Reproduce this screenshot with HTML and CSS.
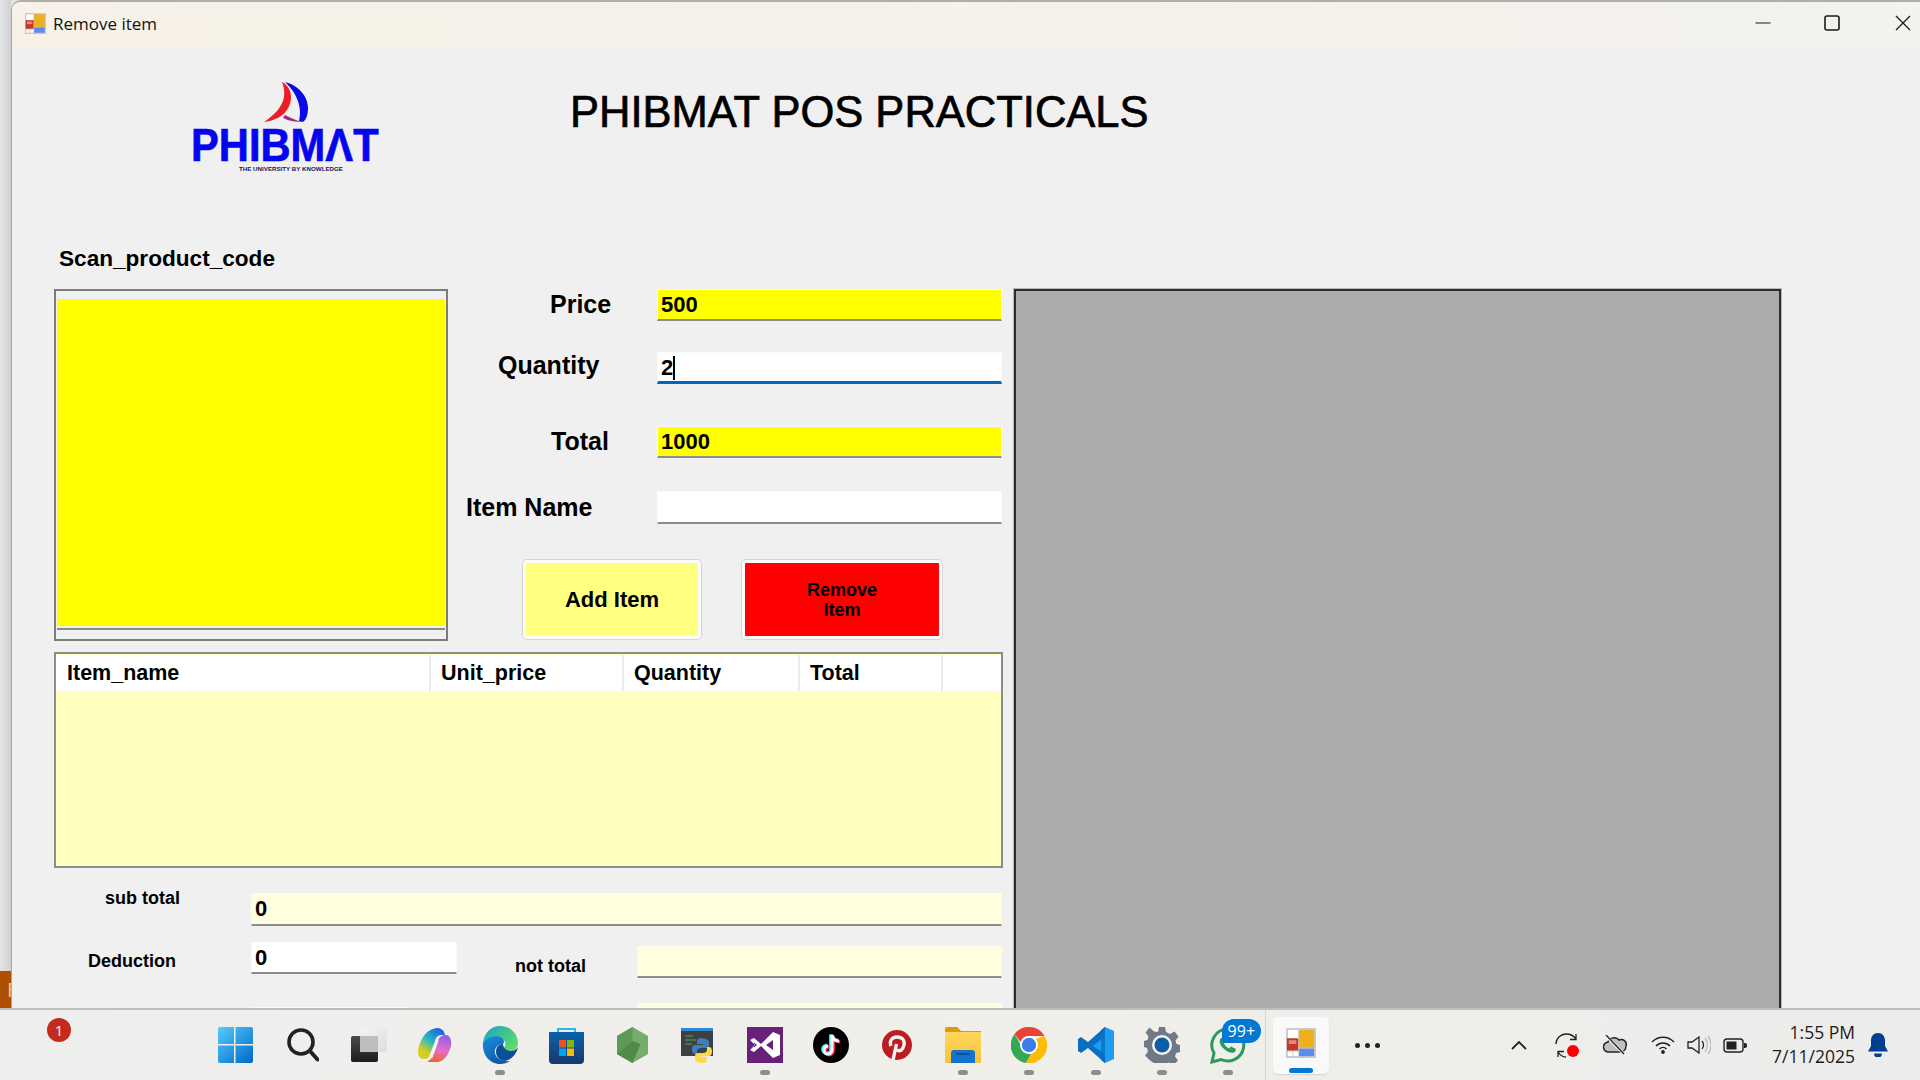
FILE: index.html
```html
<!DOCTYPE html>
<html lang="en">
<head>
<meta charset="utf-8">
<title>Remove item</title>
<link rel="stylesheet" href="styles.css">
</head>
<body>
<svg class="defs" width="0" height="0" aria-hidden="true">
  <symbol id="app-icon" viewBox="0 0 32 32">
    <rect x="0" y="0" width="32" height="32" fill="#c9c9c9"/>
    <rect x="2" y="2" width="11" height="9" fill="#fff"/>
    <rect x="2" y="25" width="5" height="5" fill="#fff"/>
    <rect x="8" y="25" width="5" height="5" fill="#fff"/>
    <rect x="1" y="11" width="12" height="13" fill="#c9352b"/>
    <rect x="3" y="13" width="8" height="4" fill="#e88a80"/>
    <rect x="14" y="2" width="16" height="19" fill="#eeb01c"/>
    <rect x="14" y="22" width="16" height="8" fill="#5a8cf0"/>
  </symbol>
</svg>
<div class="screen">
  <div class="desktop">
    <div class="edge"><div class="edge-tile">F</div></div>
    <div class="window">
      <header class="titlebar">
        <svg class="title-icon"><use href="#app-icon"/></svg>
        <span class="title-text">Remove item</span>
        <div class="controls">
          <svg class="ctl ctl-min" width="16" height="16" viewBox="0 0 16 16"><path d="M0.5 8h15" stroke="#1a1a1a" stroke-width="1.2"/></svg>
          <svg class="ctl ctl-max" width="16" height="16" viewBox="0 0 16 16"><rect x="1" y="1" width="14" height="14" rx="2" fill="none" stroke="#1a1a1a" stroke-width="1.6"/></svg>
          <svg class="ctl ctl-close" width="16" height="16" viewBox="0 0 16 16"><path d="M1 1l14 14M15 1L1 15" stroke="#1a1a1a" stroke-width="1.3"/></svg>
        </div>
      </header>
      <main class="form">
        <div class="brand">
          <svg class="logo" width="194" height="96" viewBox="190 78 194 96">
            <path d="M282 82C287 95 285 108 264 122C281 120 291 110 291 97C291 92 289 87 284 83Z" fill="#ee1c25"/>
            <path d="M285 82C298 85 308 96 308 108C308 115 306 120 303 122L299 121C302 110 299 95 285 82Z" fill="#0a0ae6"/>
            <path d="M285 115C291 118 297 121 303 122C296 122 289 121 283 118Z" fill="#a02a80"/>
            <text class="logo-name" transform="translate(191 161) scale(1 1.12)">PHIBMΛT</text>
            <text class="logo-tag" x="239" y="171" textLength="104" lengthAdjust="spacingAndGlyphs">THE UNIVERSITY BY KNOWLEDGE</text>
          </svg>
          <h1 class="heading">PHIBMAT POS PRACTICALS</h1>
        </div>
        <div class="scan-label">Scan_product_code</div>
        <div class="main">
          <div class="left">
            <div class="upper">
              <div class="scan-panel"><div class="scan-yellow"></div></div>
              <div class="fields">
                <div class="row"><span class="lbl lbl-price">Price</span><div class="input yellow">500</div></div>
                <div class="row row-qty"><span class="lbl lbl-qty">Quantity</span><div class="input white focus">2<span class="caret"></span></div></div>
                <div class="row row-total"><span class="lbl lbl-total">Total</span><div class="input yellow">1000</div></div>
                <div class="row row-item"><span class="lbl lbl-item">Item Name</span><div class="input white"></div></div>
                <div class="buttons">
                  <div class="btn btn-add">Add Item</div>
                  <div class="btn btn-remove">Remove<br>Item</div>
                </div>
              </div>
            </div>
            <div class="table">
              <div class="thead">
                <div class="th th-first">Item_name</div>
                <div class="th">Unit_price</div>
                <div class="th">Quantity</div>
                <div class="th">Total</div>
                <div class="th"></div>
              </div>
            </div>
            <div class="sum sum-1">
              <span class="sum-lbl sub-lbl">sub total</span>
              <div class="input cream sub-input">0</div>
            </div>
            <div class="sum sum-2">
              <span class="sum-lbl ded-lbl">Deduction</span>
              <div class="input white ded-input">0</div>
              <span class="sum-lbl net-lbl">not total</span>
              <div class="input cream net-input"></div>
            </div>
            <div class="sum sum-3">
              <div class="input white last-left"></div>
              <div class="input cream last-right"></div>
            </div>
          </div>
          <div class="preview"></div>
        </div>
      </main>
    </div>
  </div>
  <footer class="taskbar">
    <div class="tb-start"><span class="notif">1</span></div>
    <div class="apps">
      <div class="app"><svg width="35" height="36" viewBox="0 0 35 36"><defs><linearGradient id="win" gradientUnits="userSpaceOnUse" x1="0" y1="0" x2="35" y2="36"><stop offset="0" stop-color="#55cdfc"/><stop offset="1" stop-color="#0068c8"/></linearGradient></defs><path fill="url(#win)" d="M2 0h14v17H0V2a2 2 0 0 1 2-2zM17.500 0H33a2 2 0 0 1 2 2v15H17.500zM0 18.500h16V36H2a2 2 0 0 1-2-2zM17.500 18.500H35V34a2 2 0 0 1-2 2H17.500z"/></svg></div>
      <div class="app app-shift"><svg width="32" height="34" viewBox="0 0 32 34"><circle cx="14" cy="14" r="12" fill="none" stroke="#222" stroke-width="3.6"/><path d="M23 23l7.500 8.500" stroke="#222" stroke-width="4" stroke-linecap="round"/></svg></div>
      <div class="app app-shift"><svg width="36" height="36" viewBox="0 0 36 36"><defs><linearGradient id="tv" x1="0" y1="0" x2="0" y2="1"><stop offset="0" stop-color="#4a4a4a"/><stop offset="1" stop-color="#1c1c1c"/></linearGradient><linearGradient id="tv2" x1="0" y1="0" x2="1" y2="1"><stop offset="0" stop-color="#f4f4f4"/><stop offset="1" stop-color="#dedede"/></linearGradient></defs><rect x="0" y="9" width="27" height="26" rx="2" fill="url(#tv)"/><rect x="9" y="0" width="27" height="25" rx="2" fill="url(#tv2)"/><rect x="9" y="9" width="18" height="16" fill="#bebebe"/></svg></div>
      <div class="app app-shift"><svg width="34" height="36" viewBox="0 0 34 36"><defs><linearGradient id="co1" x1="0.8" y1="0" x2="0.2" y2="1"><stop offset="0" stop-color="#1f5fe0"/><stop offset="0.45" stop-color="#25b6c8"/><stop offset="0.8" stop-color="#d6cf20"/></linearGradient><linearGradient id="co2" x1="0.6" y1="0" x2="0.4" y2="1"><stop offset="0" stop-color="#9a5ce8"/><stop offset="0.55" stop-color="#e070c8"/><stop offset="1" stop-color="#f5602c"/></linearGradient></defs><path d="M19 1C9 2 4 10 1 19c-2 6-1 13 5 13 3 0 5-1 6-5l5-13c1-4 3-6 7-6h3c-1-5-4-7-8-7z" fill="url(#co1)"/><path d="M28 8c-4 0-7 2-8 6l-5 14c-1 3-3 5-6 7h11c7-1 11-9 13-16 1-6-1-11-5-11z" fill="url(#co2)"/><path d="M19.500 13L13 31" stroke="#f6f2f2" stroke-width="2.500"/></svg></div>
      <div class="app app-run"><svg width="36" height="38" viewBox="0 0 36 38"><defs><linearGradient id="ed1" x1="0" y1="0" x2="1" y2="0.7"><stop offset="0" stop-color="#16a2c8"/><stop offset="1" stop-color="#5fdc64"/></linearGradient><linearGradient id="ed2" x1="0" y1="0" x2="0.6" y2="1"><stop offset="0" stop-color="#1a8fe0"/><stop offset="1" stop-color="#0c59a4"/></linearGradient></defs><path d="M1 17C2 7 9 0 18 0c10 0 18 7 18 17 0 5-4 8-9 8-3 0-6-1-6-3 2-1 3-3 2-6-2-5-10-6-15-3-3 1-6 4-7 4z" fill="url(#ed1)"/><path d="M1 17c4-6 13-9 19-5 2 2 3 4 1 6-5 0-9 4-8 9 1 5 6 9 15 8-3 2-6 3-10 3C8 38 0 29 1 17z" fill="url(#ed2)"/><path d="M14 26c0-5 3-8 7-8 0 3 2 6 7 7 3 0 6-1 8-4-2 9-9 14-14 14-5-1-8-5-8-9z" fill="#0b4f96"/></svg></div>
      <div class="app"><svg width="35" height="37" viewBox="0 0 35 37"><defs><linearGradient id="st" x1="0" y1="0" x2="0" y2="1"><stop offset="0" stop-color="#0b62ac"/><stop offset="1" stop-color="#17396c"/></linearGradient></defs><path d="M9 7V2h17v5" fill="none" stroke="#29b8ec" stroke-width="2"/><path d="M0 5h35v28a4 4 0 0 1-4 4H4a4 4 0 0 1-4-4z" fill="url(#st)"/><rect x="10" y="13" width="7" height="7.500" fill="#f25022"/><rect x="18" y="13" width="7" height="7.500" fill="#7fba00"/><rect x="10" y="21.500" width="7" height="7.500" fill="#00a4ef"/><rect x="18" y="21.500" width="7" height="7.500" fill="#ffb900"/></svg></div>
      <div class="app"><svg width="31" height="36" viewBox="0 0 31 36"><path d="M15.500 0L31 9v18l-15.500 9L0 27V9z" fill="#77ad6c"/><path d="M15.500 0L0 9v18l8 4.500L15.500 14z" fill="#5e9a55"/><path d="M0 27l15.500 9 8-19-8-3z" fill="#4f8c48"/></svg></div>
      <div class="app"><svg width="34" height="36" viewBox="0 0 34 36"><rect x="0" y="1" width="32" height="28" fill="#3d4144"/><rect x="0" y="1" width="32" height="3" fill="#2e8ad0"/><path d="M4 9h8M4 13h11M4 17h7" stroke="#4caf50" stroke-width="1.200"/><path d="M21 11c-4 0-5 2-5 3.500V17h6v1h-8c-2 0-3 2-3 4.500s1 4.500 3 4.500h2v-3c0-2 2-3 4-3h5c2 0 3-1 3-3v-3c0-2-3-3.500-7-3.500z" fill="#3d7fb8"/><path d="M21 36c4 0 5-2 5-3.500V30h-6v-1h8c2 0 3-2 3-4.500S30 20 28 20h-2v3c0 2-2 3-4 3h-5c-2 0-3 1-3 3v3c0 2 3 4 7 4z" fill="#ffd94a"/></svg></div>
      <div class="app app-run"><svg width="36" height="36" viewBox="0 0 36 36"><rect width="36" height="36" fill="#68217a"/><path d="M3 13l4-2 7 6L26 5l7 3v20l-7 3-12-12-7 6-4-2 5-5zM7 15.500v5l3-2.500zM26 13l-7 5 7 5z" fill="#fff" fill-rule="evenodd"/></svg></div>
      <div class="app"><svg width="36" height="36" viewBox="0 0 36 36"><circle cx="18" cy="18" r="18" fill="#000"/><path d="M19 8v15a4 4 0 1 1-4-4M19 8c.5 3.500 3 6 7 6" fill="none" stroke="#25f4ee" stroke-width="3.400" transform="translate(-1.200 -.8)"/><path d="M19 8v15a4 4 0 1 1-4-4M19 8c.5 3.500 3 6 7 6" fill="none" stroke="#fe2c55" stroke-width="3.400" transform="translate(1.200 .8)"/><path d="M19 8v15a4 4 0 1 1-4-4M19 8c.5 3.500 3 6 7 6" fill="none" stroke="#fff" stroke-width="3"/></svg></div>
      <div class="app"><svg width="30" height="30" viewBox="0 0 30 30"><circle cx="15" cy="15" r="15" fill="#bd1c22"/><path d="M11 30l3.500-16M9 16c-2-5 1-9 6-9s8 3 7 8-4 7-7 5" fill="none" stroke="#f4f4f0" stroke-width="3.400"/></svg></div>
      <div class="app app-run"><svg width="36" height="36" viewBox="0 0 36 36"><defs><linearGradient id="fo" x1="0" y1="0" x2="0" y2="1"><stop offset="0" stop-color="#ffd75e"/><stop offset="1" stop-color="#f9c13a"/></linearGradient></defs><path d="M0 2a2 2 0 0 1 2-2h10l4 4h20v4H0z" fill="#d99e10"/><rect x="0" y="5" width="36" height="31" fill="url(#fo)"/><path d="M6 26a3 3 0 0 1 3-3h18a3 3 0 0 1 3 3v10H6z" fill="#1274cc"/><rect x="11" y="26" width="14" height="2" fill="#0b4f96"/></svg></div>
      <div class="app app-run"><svg width="36" height="36" viewBox="0 0 36 36"><path d="M18 0a18 18 0 0 1 15.600 9H18a9 9 0 0 0-8.500 6L3.600 7A18 18 0 0 1 18 0z" fill="#ea4335"/><path d="M3.600 7l8.600 15a9 9 0 0 0 8 4.800L15 36A18 18 0 0 1 3.600 7z" fill="#34a853"/><path d="M33.600 9A18 18 0 0 1 15 36l8-13.500A9 9 0 0 0 25 12z" fill="#fbbc04"/><circle cx="18" cy="18" r="9" fill="#fff"/><circle cx="18" cy="18" r="7.200" fill="#3b7ded"/></svg></div>
      <div class="app app-run"><svg width="36" height="36" viewBox="0 0 36 36"><path d="M27 0l9 4v28l-9 4L10 20z" fill="#1f9cf0"/><path d="M27 0v36l-4-3V3z" fill="#0b7ad1"/><path d="M27 0L10 15 3 10 0 12v12l3 2 7-5 17 15 0-9-12-8 12-10z" fill="#0a6fc2"/></svg></div>
      <div class="app app-run"><svg width="36" height="36" viewBox="0 0 36 36"><path d="M15 0h6l1 5 4 2 4.500-2.500 4 5-3 4 1 3.500 3.500 1v7l-4 1-1 3.500 3 4-4.500 4.500-4.500-2.500-4 1.500-1 4h-6l-1-4-4-1.500L5.500 33 1 28.500l3-4L3 21l-3-1v-6l3.500-1 1-3.500-3-4 4-5L10 4.500 14 5z" fill="#6f7a86"/><circle cx="18" cy="18" r="10" fill="#f4f4f4"/><circle cx="18" cy="18" r="7.500" fill="#0d5ea8"/></svg></div>
      <div class="app app-run"><svg width="36" height="37" viewBox="0 0 36 37"><path d="M18 2a16 16 0 0 0-14 24L2 35l9-2.500A16 16 0 1 0 18 2z" fill="none" stroke="#2a9a5a" stroke-width="3"/><path d="M11 11c-2 2-2 6 2 10s9 6 12 4l1-3-5-2.500-2 2c-2-1-4-3-5-5l2-2-2-4z" fill="#2a9a5a"/></svg><span class="badge">99+</span></div>
    </div>
    <div class="tb-sep"></div>
    <div class="app-active"><svg width="32" height="30"><use href="#app-icon"/></svg><span class="active-bar"></span></div>
    <div class="more"><i></i><i></i><i></i></div>
    <div class="tray">
      <svg class="t-chev" width="16" height="10" viewBox="0 0 16 10"><path d="M1 9l7-7 7 7" fill="none" stroke="#222" stroke-width="1.800"/></svg>
      <svg class="t-sync" width="25" height="25" viewBox="0 0 25 25"><path d="M1 11C1 5 6 1 11 1c4 0 8 2 10 5M21 1v5.500h-6M3 19c2 3 4 5 8 5M3 24v-5.500h6" fill="none" stroke="#222" stroke-width="1.300"/><circle cx="18" cy="18" r="6" fill="#f00"/></svg>
      <svg class="t-cloud" width="24" height="20" viewBox="0 0 24 20"><path d="M6 17a5 5 0 0 1-1-10c1-4 8-6 11-2a5 5 0 0 1 7 6c0 4-3 6-6 6z" fill="#c0c0c0" stroke="#222" stroke-width="1.500"/><path d="M3 1l18 18" stroke="#eee" stroke-width="3"/><path d="M3 0l18 19" stroke="#222" stroke-width="1.300"/></svg>
      <svg class="t-wifi" width="24" height="18" viewBox="0 0 24 18"><path d="M1 6c6-6.500 16-6.500 22 0M5 10c4-4 10-4 14 0M8.500 13c2-2 5-2 7 0" fill="none" stroke="#222" stroke-width="1.500"/><circle cx="12" cy="16" r="1.900" fill="#222"/></svg>
      <svg class="t-vol" width="24" height="20" viewBox="0 0 24 20"><path d="M1 7h4l7-5v16l-7-5H1z" fill="none" stroke="#222" stroke-width="1.300"/><path d="M15 6c2 2 2 6 0 8" fill="none" stroke="#222" stroke-width="1.300"/><path d="M18 3c3 4 3 10 0 14M21 1c4 5 4 13 0 18" fill="none" stroke="#bbb" stroke-width="1.300"/></svg>
      <svg class="t-bat" width="24" height="15" viewBox="0 0 24 15"><rect x="1" y="1" width="19" height="13" rx="3" fill="none" stroke="#222" stroke-width="1.400"/><rect x="3.500" y="3.500" width="10" height="8" fill="#222"/><path d="M21 5h1a2 2 0 0 1 2 2v1a2 2 0 0 1-2 2h-1z" fill="#222"/></svg>
      <div class="clock"><div>1:55 PM</div><div>7/11/2025</div></div>
      <svg class="t-bell" width="20" height="24" viewBox="0 0 20 24"><path d="M10 0c4.500 0 7 3.500 7 7.500V13l3 5.500H0L3 13V7.500C3 3.500 5.500 0 10 0z" fill="#003e92"/><path d="M6 20.500h8a4 4 0 0 1-8 0z" fill="#003e92"/></svg>
    </div>
  </footer>
</div>
</body>
</html>
```

FILE: styles.css
```css
* { box-sizing: border-box; }
html, body { margin: 0; padding: 0; }
body { font-family: "Liberation Sans", Arial, sans-serif; color: #000; }
.defs { position: absolute; }

.screen { width: 1920px; height: 1080px; display: flex; flex-direction: column; overflow: hidden; background: #e4e4e6; }

.desktop { height: 1008px; display: flex; }
.edge { width: 11px; display: flex; flex-direction: column; justify-content: flex-end; background: linear-gradient(90deg, #e6e6e8, #cfcfd2); }
.edge-tile { height: 37px; background: #b04f00; color: #e8c8a8; font: 20px/37px "Open Sans", sans-serif; padding-left: 7px; overflow: hidden; }

.window { flex: 1; display: flex; flex-direction: column; min-width: 0; background: #f0f0f0; border-top: 2px solid #aeaeae; border-left: 1px solid #a8a8a8; border-top-left-radius: 10px; overflow: hidden; }

.titlebar { height: 45px; flex: none; display: flex; align-items: center; padding-bottom: 2px; background: linear-gradient(90deg, #f7f1e7, #f6f1e9 50%, #f3f2ee); }
.title-icon { width: 21px; height: 21px; margin: 0 0 0 13px; }
.title-text { font: 17px "Open Sans", sans-serif; margin-left: 7px; color: #111; }
.controls { margin-left: auto; display: flex; align-items: center; padding-bottom: 2px; }
.ctl-max { margin-left: 53px; }
.ctl-close { margin: 0 9px 0 55px; }

.form { flex: 1; min-height: 0; overflow: hidden; padding-left: 42px; }

.brand { height: 199px; display: flex; align-items: flex-start; }
.logo { margin: 31px 0 0 136px; flex: none; }
.logo-name { font: bold 41.700px "Liberation Sans", sans-serif; fill: #0404ee; stroke: #0404ee; stroke-width: 0.6px; }
.logo-tag { font: bold 6px "Liberation Sans", sans-serif; fill: #14145a; }
.heading { margin: 40px 0 0 186px; font-size: 43.500px; line-height: 50px; font-weight: 400; -webkit-text-stroke: 0.7px #000; white-space: nowrap; }

.scan-label { height: 25px; padding-left: 5px; margin-bottom: 18px; font-size: 22.600px; line-height: 25px; font-weight: 700; }

.main { display: flex; gap: 11px; align-items: flex-start; }
.left { width: 949px; flex: none; }
.preview { width: 767px; height: 800px; flex: none; background: #ababab; border: 2px solid #2c2c2c; border-bottom: 0; box-shadow: 0 0 0 1px #b9b9b9; }

.upper { display: flex; gap: 18px; height: 352px; }
.scan-panel { width: 394px; height: 352px; flex: none; border: 2px solid #7c7c7c; padding-top: 8px; background: #f0f0f0; }
.scan-yellow { height: 327px; margin: 0 1px; background: #ff0; box-shadow: 0 2px 0 0 #f0f0f0, 0 4px 0 0 #8a8a8a; }

.fields { width: 537px; flex: none; display: flex; flex-direction: column; }
.row { display: flex; align-items: center; height: 32px; }
.row-qty { margin-top: 31px; }
.row-total { margin-top: 42px; }
.row-item { margin-top: 33px; height: 33px; }

.lbl { width: 191px; flex: none; font-size: 25px; font-weight: 700; line-height: 32px; white-space: nowrap; margin-bottom: 2px; }
.lbl-price { padding-left: 84px; }
.lbl-qty { padding-left: 32px; margin-bottom: 6px; }
.lbl-total { padding-left: 85px; }

.input { height: 100%; font-size: 22px; font-weight: 700; line-height: 30px; padding: 0 2px 0 3px; border: 1px solid #fafafa; border-bottom: 2px solid #8c8c8c; white-space: nowrap; overflow: hidden; }
.row .input { width: 345px; }
.yellow { background: #ff0; }
.white { background: #fff; }
.cream { background: #ffffdf; }
.focus { border-bottom: 3px solid #0067c0; }
.caret { display: inline-block; width: 1.500px; height: 24px; background: #000; vertical-align: -5px; }

.buttons { display: flex; gap: 41px; margin: 36px 0 0 57px; height: 79px; }
.btn { display: flex; align-items: center; justify-content: center; text-align: center; font-weight: 700; border-radius: 4px; box-shadow: 0 0 0 1px #d4d4d4; }
.btn-add { width: 178px; background: #ffff80; border: 3px solid #fbfbfb; font-size: 22px; }
.btn-remove { width: 200px; background: #f00; border: 3px solid #fbfbfb; font-size: 18px; line-height: 20px; }

.table { height: 216px; margin-top: 11px; background: #ffffc0; border: 2px solid #8c8c8c; }
.thead { height: 37px; display: grid; grid-template-columns: 375px 193px 176px 143px 1fr; background: #fff; border-top: 1px solid #ffffc0; }
.th { padding-left: 10px; font-size: 21.500px; font-weight: 700; line-height: 36px; border-right: 2px solid #ececec; }
.th-first { padding-left: 11px; }
.th:last-child { border-right: 0; }

.sum { display: flex; align-items: flex-start; }
.sum-lbl { font-size: 18px; font-weight: 700; line-height: 20px; white-space: nowrap; }
.sum-1 { margin-top: 25px; }
.sub-lbl { width: 197px; padding-left: 51px; margin-top: -5px; flex: none; }
.sub-input { width: 751px; height: 33px; }
.sum-2 { margin-top: 16px; height: 36px; }
.ded-lbl { width: 197px; padding-left: 34px; margin-top: 9px; flex: none; }
.ded-input { width: 206px; height: 32px; }
.net-lbl { width: 122px; margin: 14px 0 0 58px; flex: none; }
.net-input { width: 365px; height: 32px; margin-top: 4px; }
.sum-3 { margin-top: 25px; padding-left: 197px; }
.last-left { width: 159px; height: 32px; margin-top: 4px; }
.last-right { width: 365px; height: 32px; margin-left: 227px; }

.taskbar { height: 72px; flex: none; display: flex; align-items: center; border-top: 2px solid #bdbdbd; background: linear-gradient(90deg, #eeeeee, #f0efe9 50%, #ececec); }
.tb-start { width: 202px; flex: none; height: 100%; padding: 8px 0 0 47px; }
.notif { display: block; width: 24px; height: 24px; border-radius: 50%; background: #c42b1c; color: #fff; font: 15px/24px "Open Sans", sans-serif; text-align: center; }
.apps { display: flex; flex: none; }
.app { width: 66.200px; height: 70px; position: relative; display: flex; align-items: center; justify-content: center; }
.app-shift { padding-left: 3px; }
.app-run::after { content: ""; position: absolute; left: 50%; bottom: 5px; width: 10px; height: 5px; margin-left: -5px; border-radius: 3px; background: #8d8d8d; }
.badge { position: absolute; left: 27px; top: 9px; width: 39px; height: 24px; border-radius: 12px 12px 12px 4px; background: #0078d4; color: #fff; font: 16px/24px "Open Sans", sans-serif; text-align: center; }
.tb-sep { width: 1px; height: 70px; margin-left: 4px; background: #d6d6d6; flex: none; }
.app-active { position: relative; width: 56px; height: 57px; margin: 0 0 0 7px; flex: none; display: flex; align-items: center; justify-content: center; background: #f9f9f9; border-radius: 5px; box-shadow: 0 1px 1px #d4d4d4; padding-bottom: 4px; }
.active-bar { position: absolute; left: 16px; bottom: 1px; width: 24px; height: 5px; border-radius: 3px; background: #0078d4; }
.more { margin-left: 26px; display: flex; gap: 5px; flex: none; }
.more i { display: block; width: 5px; height: 5px; border-radius: 50%; background: #222; }
.tray { margin-left: auto; padding-right: 32px; display: flex; align-items: center; flex: none; }
.t-sync { margin-left: 28px; }
.t-cloud { margin-left: 23px; }
.t-wifi { margin-left: 24px; }
.t-vol { margin-left: 12px; }
.t-bat { margin-left: 12px; }
.clock { margin: 0 0 2px 23px; width: 85px; text-align: right; font: 17.500px/24px "Open Sans", sans-serif; color: #1c1c1c; white-space: nowrap; }
.t-bell { margin-left: 13px; }
```
